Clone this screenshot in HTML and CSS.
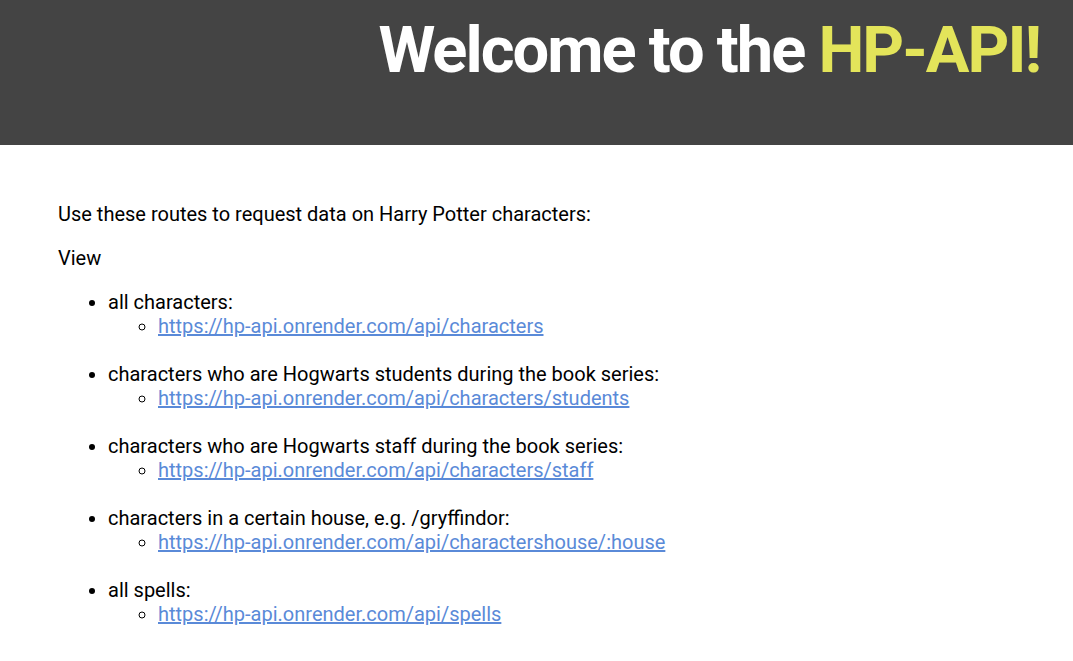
FILE: index.html
```html
<!DOCTYPE html>
<html lang="en">
<head>
<meta charset="utf-8">
<title>HP-API</title>
<link rel="stylesheet" href="styles.css">
</head>
<body>
<header class="banner">
  <h1 class="title">Welcome to the <span class="accent">HP-API!</span></h1>
</header>
<main class="content">
  <p class="text">Use these routes to request data on Harry Potter characters:</p>
  <p class="text">View</p>
  <ul class="routes">
    <li class="route">all characters:
      <ul class="links"><li><a href="#">https://hp-api.onrender.com/api/characters</a></li></ul>
    </li>
    <li class="route">characters who are Hogwarts students during the book series:
      <ul class="links"><li><a href="#">https://hp-api.onrender.com/api/characters/students</a></li></ul>
    </li>
    <li class="route">characters who are Hogwarts staff during the book series:
      <ul class="links"><li><a href="#">https://hp-api.onrender.com/api/characters/staff</a></li></ul>
    </li>
    <li class="route">characters in a certain house, e.g. /gryffindor:
      <ul class="links"><li><a href="#">https://hp-api.onrender.com/api/charactershouse/:house</a></li></ul>
    </li>
    <li class="route">all spells:
      <ul class="links"><li><a href="#">https://hp-api.onrender.com/api/spells</a></li></ul>
    </li>
  </ul>
</main>
</body>
</html>
```
FILE: styles.css
```css
html, body {
  margin: 0;
  padding: 0;
  background: #ffffff;
}
body {
  font-family: Roboto, "Liberation Sans", sans-serif;
  color: #000;
  font-size: 20px;
  line-height: 24px;
}
.banner {
  background: #444444;
  height: 145px;
  display: flex;
  justify-content: flex-end;
  padding: 0 33px 0 0;
}
.title {
  margin: 0;
  padding-top: 12px;
  font-size: 65px;
  line-height: 76px;
  font-weight: 700;
  color: #ffffff;
  letter-spacing: -2px;
}
.accent {
  color: #e3e45a;
}
.content {
  padding: 57px 58px 0 58px;
}
.text {
  margin: 0 0 20px 0;
}
.routes {
  margin: 0;
  padding-left: 50px;
  list-style: disc;
}
.route {
  margin-bottom: 24px;
}
.links {
  margin: 0;
  padding-left: 50px;
  list-style: circle;
}
.links a {
  color: #5a8ad8;
}
```
